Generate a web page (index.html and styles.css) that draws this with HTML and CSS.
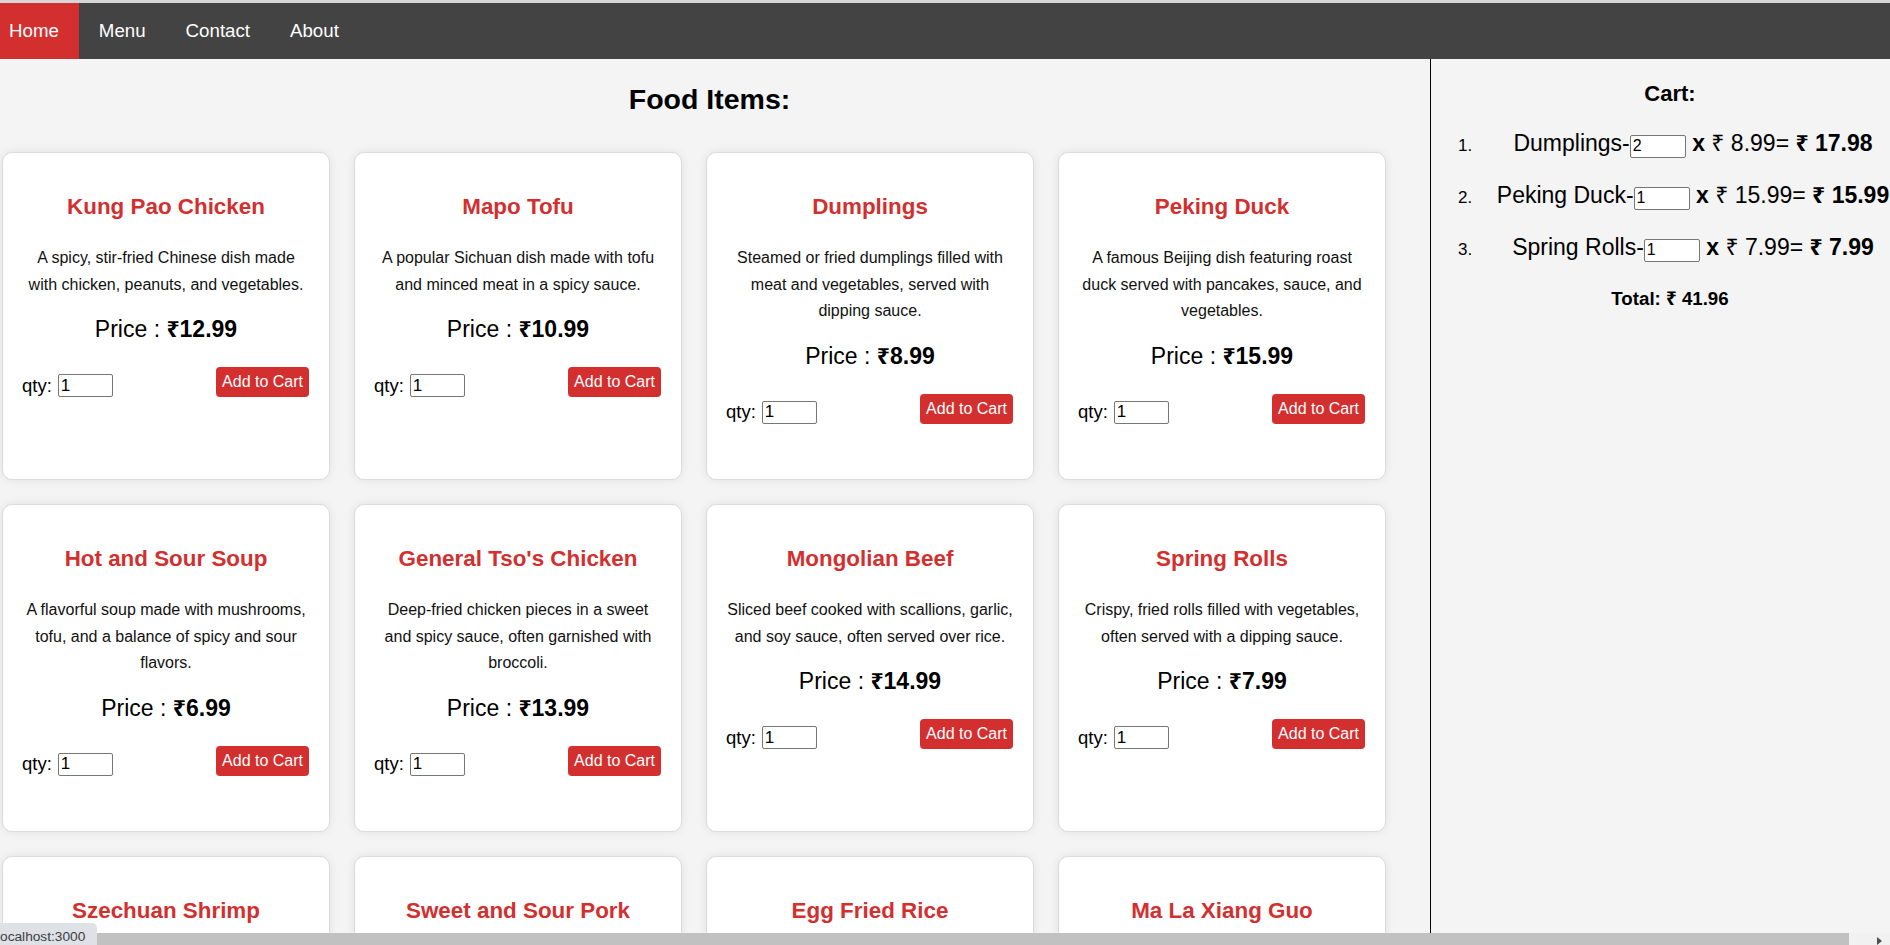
FILE: index.html
```html
<!DOCTYPE html>
<html lang="en">
<head>
<meta charset="utf-8">
<title>Food Items</title>
<link rel="stylesheet" href="styles.css">
</head>
<body>
<div class="topstrip"></div>
<div class="page">
  <nav class="navbar">
    <a class="nav-link active" href="#">Home</a>
    <a class="nav-link" href="#">Menu</a>
    <a class="nav-link" href="#">Contact</a>
    <a class="nav-link" href="#">About</a>
  </nav>
  <div class="layout">
    <main class="menu">
      <h2 class="menu-title">Food Items:</h2>
      <div class="grid">
        <div class="card">
          <h3 class="card-title">Kung Pao Chicken</h3>
          <p class="card-desc">A spicy, stir-fried Chinese dish made with chicken, peanuts, and vegetables.</p>
          <p class="card-price">Price : <b>₹12.99</b></p>
          <div class="card-actions">
            <label class="qty"><span>qty:</span><input class="qty-input" type="text" value="1"></label>
            <button class="add-btn">Add to Cart</button>
          </div>
        </div>
        <div class="card">
          <h3 class="card-title">Mapo Tofu</h3>
          <p class="card-desc">A popular Sichuan dish made with tofu and minced meat in a spicy sauce.</p>
          <p class="card-price">Price : <b>₹10.99</b></p>
          <div class="card-actions">
            <label class="qty"><span>qty:</span><input class="qty-input" type="text" value="1"></label>
            <button class="add-btn">Add to Cart</button>
          </div>
        </div>
        <div class="card">
          <h3 class="card-title">Dumplings</h3>
          <p class="card-desc">Steamed or fried dumplings filled with meat and vegetables, served with dipping sauce.</p>
          <p class="card-price">Price : <b>₹8.99</b></p>
          <div class="card-actions">
            <label class="qty"><span>qty:</span><input class="qty-input" type="text" value="1"></label>
            <button class="add-btn">Add to Cart</button>
          </div>
        </div>
        <div class="card">
          <h3 class="card-title">Peking Duck</h3>
          <p class="card-desc">A famous Beijing dish featuring roast duck served with pancakes, sauce, and vegetables.</p>
          <p class="card-price">Price : <b>₹15.99</b></p>
          <div class="card-actions">
            <label class="qty"><span>qty:</span><input class="qty-input" type="text" value="1"></label>
            <button class="add-btn">Add to Cart</button>
          </div>
        </div>
        <div class="card">
          <h3 class="card-title">Hot and Sour Soup</h3>
          <p class="card-desc">A flavorful soup made with mushrooms, tofu, and a balance of spicy and sour flavors.</p>
          <p class="card-price">Price : <b>₹6.99</b></p>
          <div class="card-actions">
            <label class="qty"><span>qty:</span><input class="qty-input" type="text" value="1"></label>
            <button class="add-btn">Add to Cart</button>
          </div>
        </div>
        <div class="card">
          <h3 class="card-title">General Tso's Chicken</h3>
          <p class="card-desc">Deep-fried chicken pieces in a sweet and spicy sauce, often garnished with broccoli.</p>
          <p class="card-price">Price : <b>₹13.99</b></p>
          <div class="card-actions">
            <label class="qty"><span>qty:</span><input class="qty-input" type="text" value="1"></label>
            <button class="add-btn">Add to Cart</button>
          </div>
        </div>
        <div class="card">
          <h3 class="card-title">Mongolian Beef</h3>
          <p class="card-desc">Sliced beef cooked with scallions, garlic, and soy sauce, often served over rice.</p>
          <p class="card-price">Price : <b>₹14.99</b></p>
          <div class="card-actions">
            <label class="qty"><span>qty:</span><input class="qty-input" type="text" value="1"></label>
            <button class="add-btn">Add to Cart</button>
          </div>
        </div>
        <div class="card">
          <h3 class="card-title">Spring Rolls</h3>
          <p class="card-desc">Crispy, fried rolls filled with vegetables, often served with a dipping sauce.</p>
          <p class="card-price">Price : <b>₹7.99</b></p>
          <div class="card-actions">
            <label class="qty"><span>qty:</span><input class="qty-input" type="text" value="1"></label>
            <button class="add-btn">Add to Cart</button>
          </div>
        </div>
        <div class="card">
          <h3 class="card-title">Szechuan Shrimp</h3>
          <p class="card-desc">Shrimp stir-fried with Szechuan peppercorns, chili and garlic in a bold sauce.</p>
          <p class="card-price">Price : <b>₹16.99</b></p>
          <div class="card-actions">
            <label class="qty"><span>qty:</span><input class="qty-input" type="text" value="1"></label>
            <button class="add-btn">Add to Cart</button>
          </div>
        </div>
        <div class="card">
          <h3 class="card-title">Sweet and Sour Pork</h3>
          <p class="card-desc">Crispy pork tossed with pineapple and peppers in a tangy sweet and sour sauce.</p>
          <p class="card-price">Price : <b>₹11.99</b></p>
          <div class="card-actions">
            <label class="qty"><span>qty:</span><input class="qty-input" type="text" value="1"></label>
            <button class="add-btn">Add to Cart</button>
          </div>
        </div>
        <div class="card">
          <h3 class="card-title">Egg Fried Rice</h3>
          <p class="card-desc">Wok-fried rice with scrambled egg, peas, carrots and spring onions.</p>
          <p class="card-price">Price : <b>₹9.99</b></p>
          <div class="card-actions">
            <label class="qty"><span>qty:</span><input class="qty-input" type="text" value="1"></label>
            <button class="add-btn">Add to Cart</button>
          </div>
        </div>
        <div class="card">
          <h3 class="card-title">Ma La Xiang Guo</h3>
          <p class="card-desc">A numbing and spicy stir-fry pot with meats and vegetables of your choice.</p>
          <p class="card-price">Price : <b>₹17.99</b></p>
          <div class="card-actions">
            <label class="qty"><span>qty:</span><input class="qty-input" type="text" value="1"></label>
            <button class="add-btn">Add to Cart</button>
          </div>
        </div>
      </div>
    </main>
    <aside class="cart">
      <h3 class="cart-title">Cart:</h3>
      <ol class="cart-list">
        <li><span class="cart-item">Dumplings-<input class="cart-qty" type="text" value="2"> <b>x</b> ₹ 8.99= <b>₹ 17.98</b></span></li>
        <li><span class="cart-item">Peking Duck-<input class="cart-qty" type="text" value="1"> <b>x</b> ₹ 15.99= <b>₹ 15.99</b></span></li>
        <li><span class="cart-item">Spring Rolls-<input class="cart-qty" type="text" value="1"> <b>x</b> ₹ 7.99= <b>₹ 7.99</b></span></li>
      </ol>
      <p class="cart-total">Total: ₹ 41.96</p>
    </aside>
  </div>
</div>
<div class="statusbar">localhost:3000</div>
<div class="hscroll"><div class="hscroll-thumb"></div><div class="hscroll-arrow"></div></div>
</body>
</html>
```
FILE: styles.css
```css
* { box-sizing: border-box; }

html, body {
  margin: 0;
  height: 100%;
  overflow: hidden;
}

body {
  background: #f4f4f4;
  font-family: "Liberation Sans", Arial, "Noto Sans", "DejaVu Sans", sans-serif;
  color: #000;
}

.topstrip {
  height: 3px;
  background: #d6d6d6;
}

.page {
  width: 1920px;
  margin-left: -11px;
}

/* Navbar */
.navbar {
  display: flex;
  height: 56px;
  background: #434343;
}

.nav-link {
  display: flex;
  align-items: center;
  padding: 0 20px;
  color: #fff;
  text-decoration: none;
  font-size: 18.7px;
}

.nav-link.active {
  background: #d32f2f;
}

/* Layout */
.layout {
  display: flex;
  align-items: stretch;
}

.menu {
  width: 1441px;
  flex: none;
}

.menu-title {
  margin: 24px 0 37px;
  font-size: 28.5px;
  line-height: 32px;
  text-align: center;
}

.grid {
  display: grid;
  grid-template-columns: repeat(4, 328px);
  gap: 24px;
  padding-left: 13px;
}

/* Card */
.card {
  height: 328px;
  padding: 20px;
  background: #fff;
  border: 1px solid #dcdcdc;
  border-radius: 10px;
  box-shadow: 0 0 10px rgba(0, 0, 0, 0.08);
  text-align: center;
}

.card-title {
  margin: 21px 0 0;
  font-size: 22.4px;
  line-height: 25px;
  color: #d32f2f;
}

.card-desc {
  margin: 26px -2px 0;
  font-size: 16px;
  line-height: 26.5px;
  color: #111;
}

.card-price {
  margin: 18px 0 0;
  font-size: 23px;
  line-height: 26px;
}

.card-actions {
  margin-top: 25px;
  display: flex;
  justify-content: space-between;
  align-items: flex-end;
}

.qty {
  display: flex;
  align-items: center;
  gap: 6px;
  font-size: 18.5px;
  margin-left: -1px;
}

.qty-input {
  width: 55px;
  height: 23px;
  padding: 0 2px;
  font-family: inherit;
  font-size: 17px;
  border: 1px solid #767676;
  border-radius: 2px;
  background: #fff;
}

.add-btn {
  padding: 6px;
  font-family: inherit;
  font-size: 16px;
  line-height: 18px;
  color: #fff;
  background: #d32f2f;
  border: none;
  border-radius: 4px;
}

/* Cart */
.cart {
  width: 479px;
  flex: none;
  border-left: 1px solid #000;
}

.cart-title {
  margin: 23px 0 0;
  font-size: 22px;
  line-height: 24px;
  text-align: center;
}

.cart-list {
  margin: 22px 0 0;
  padding-left: 46px;
}

.cart-list li {
  font-size: 17px;
  line-height: 30px;
  margin-bottom: 19px;
  text-align: center;
}

.cart-item {
  font-size: 23px;
  white-space: nowrap;
}

.cart-qty {
  width: 56px;
  height: 23px;
  padding: 0 2px;
  font-family: inherit;
  font-size: 16px;
  border: 1px solid #767676;
  border-radius: 2px;
  background: #fff;
}

.cart-total {
  margin: 23px 0 0;
  font-size: 18.7px;
  line-height: 21px;
  font-weight: bold;
  text-align: center;
}

/* Browser chrome overlays */
.statusbar {
  position: fixed;
  left: -10px;
  bottom: 0;
  height: 22px;
  padding: 6px 12px 0 7px;
  font-size: 13.7px;
  line-height: 16px;
  color: #3c4043;
  background: #dee1e6;
  border-top-right-radius: 5px;
  overflow: hidden;
  z-index: 3;
}

.hscroll {
  position: fixed;
  left: 0;
  right: 0;
  bottom: 0;
  height: 12px;
  background: #f1f1f1;
  z-index: 2;
}

.hscroll-thumb {
  width: 1849px;
  height: 12px;
  background: #c1c1c1;
}

.hscroll-arrow {
  position: absolute;
  left: 1877px;
  top: 4px;
  width: 0;
  height: 0;
  border-left: 5px solid #505050;
  border-top: 4px solid transparent;
  border-bottom: 4px solid transparent;
}
```
